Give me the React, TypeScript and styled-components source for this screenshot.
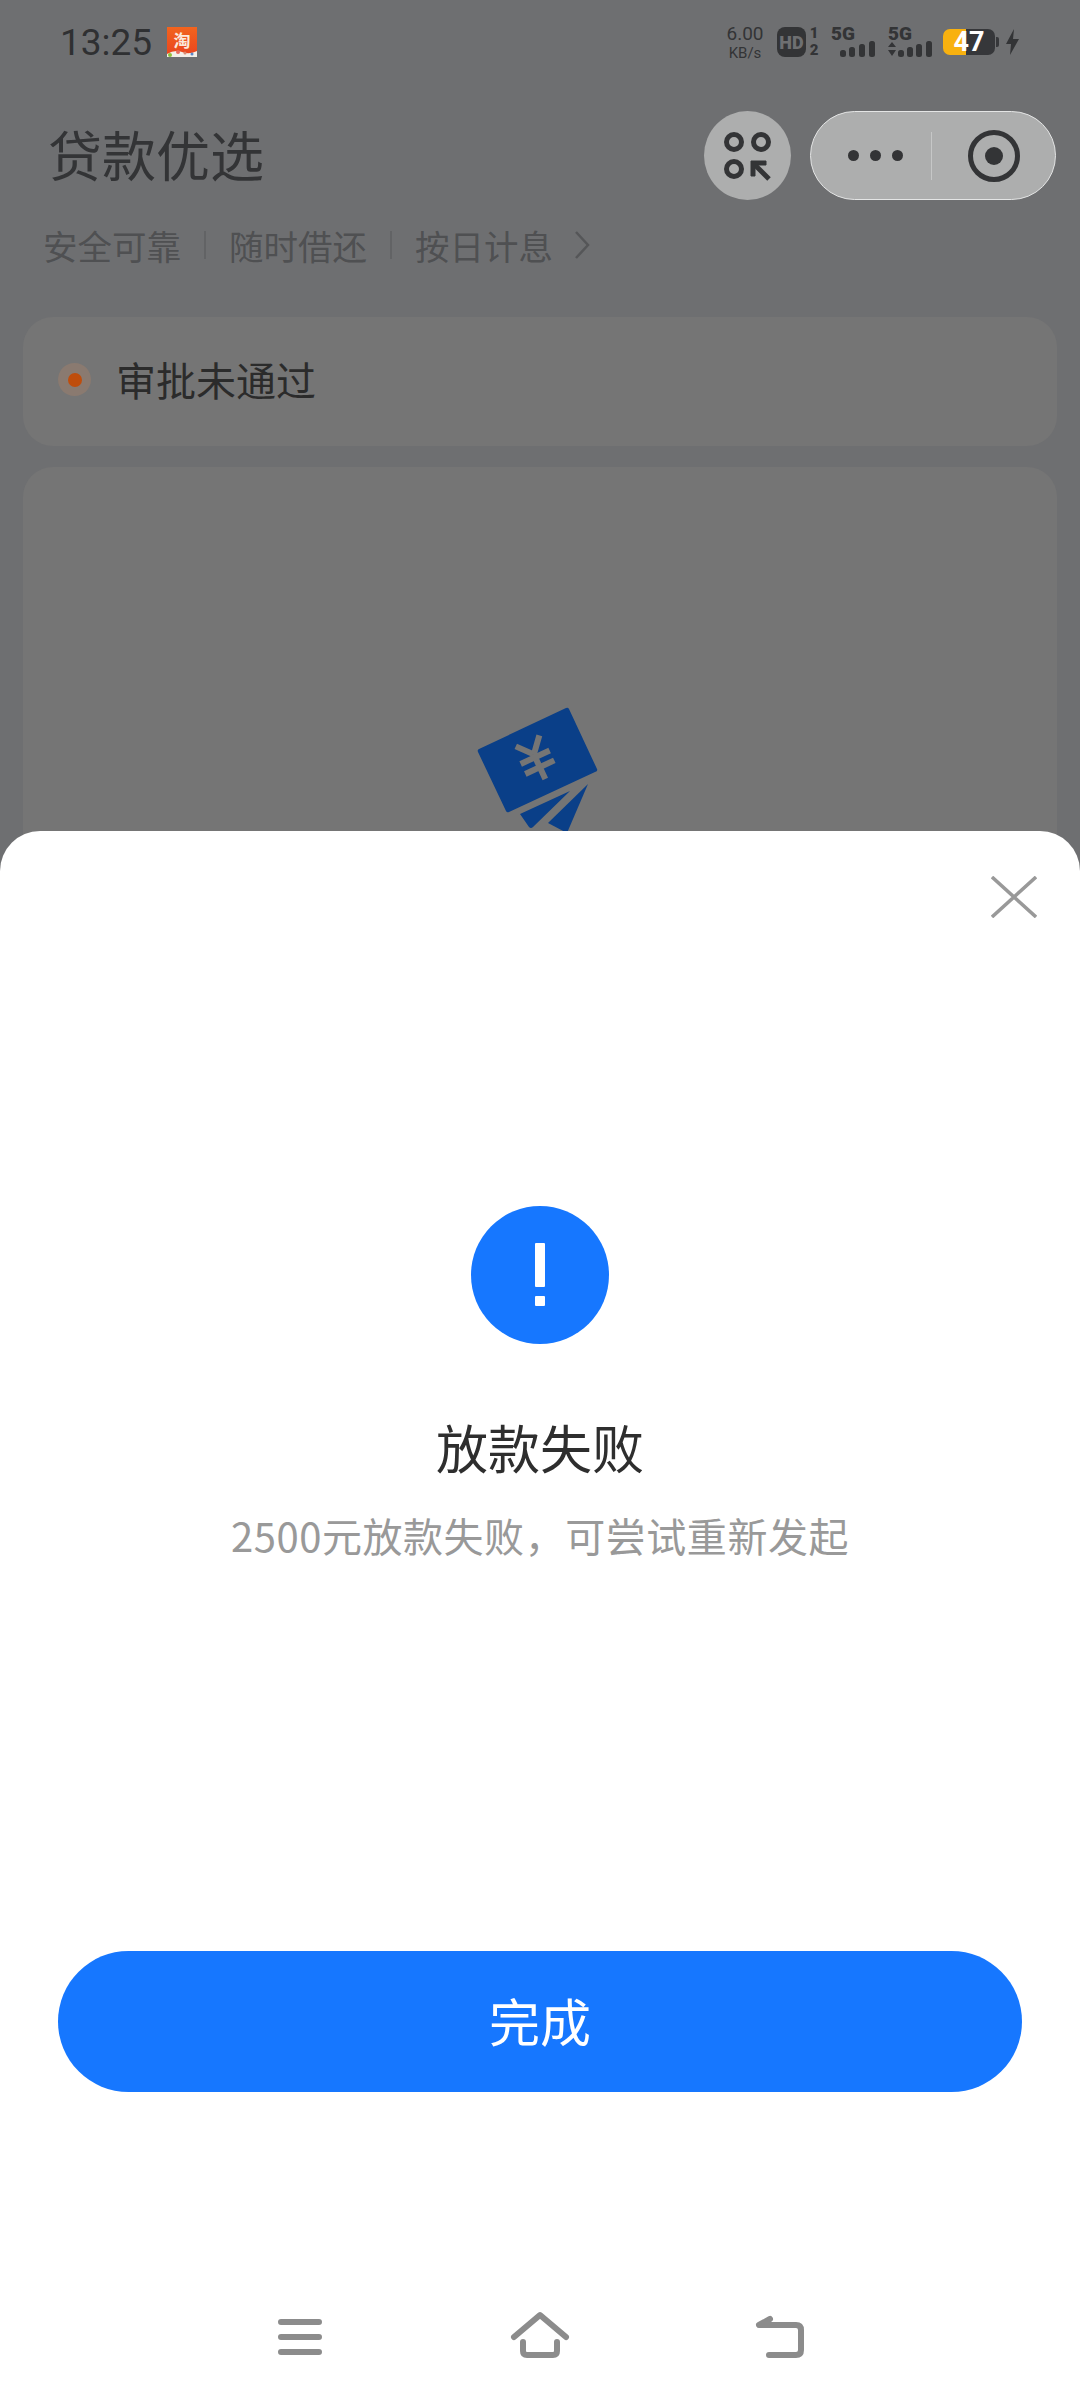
import styled, { createGlobalStyle } from 'styled-components';

const cjk = `"Noto Sans CJK SC", "Noto Sans", sans-serif`;
const latin = `Roboto, "Noto Sans CJK SC", sans-serif`;

const GlobalStyle = createGlobalStyle`
  html, body {
    margin: 0;
    padding: 0;
    background: #6e6f71;
  }
  * { box-sizing: border-box; }
`;

const Page = styled.div`
  position: relative;
  width: 1080px;
  height: 2400px;
  overflow: hidden;
  background: #6e6f71;
  font-family: ${cjk};
`;

const StatusBar = styled.div`
  height: 84px;
  display: flex;
  align-items: center;
  justify-content: space-between;
  padding: 0 61px 0 60px;
`;

const StatusLeft = styled.div`
  display: flex;
  align-items: center;
  gap: 15px;
`;

const Time = styled.span`
  font-family: ${latin};
  font-size: 37px;
  color: #2f3032;
  line-height: 1;
`;

const StatusRight = styled.div`
  display: flex;
  align-items: center;
`;

const NetSpeed = styled.div`
  width: 38px;
  display: flex;
  flex-direction: column;
  align-items: center;
  color: #333436;
  font-family: ${latin};
  line-height: 1;
  margin-right: 13px;
`;

const SpeedValue = styled.span`
  font-size: 19px;
  margin-bottom: 3px;
`;

const SpeedUnit = styled.span`
  font-size: 15px;
`;

const HdBadge = styled.span`
  width: 29px;
  height: 30px;
  border-radius: 8px;
  background: #333436;
  color: #6e6f71;
  font-family: ${latin};
  font-weight: 900;
  font-size: 18px;
  display: flex;
  align-items: center;
  justify-content: center;
  margin-right: 3px;
`;

const SimDigits = styled.div`
  width: 10px;
  height: 30px;
  display: flex;
  flex-direction: column;
  justify-content: space-between;
  align-items: center;
  font-family: ${latin};
  font-weight: 900;
  font-size: 15px;
  line-height: 13px;
  color: #333436;
  margin-right: 12px;
`;

const SignalGroup = styled.div<{ $gap: number }>`
  width: 44px;
  height: 30px;
  margin-right: ${p => p.$gap}px;
  display: flex;
  flex-direction: column;
`;

const SignalLabel = styled.span`
  font-family: ${latin};
  font-weight: 900;
  font-size: 19px;
  line-height: 14px;
  color: #333436;
`;

const Battery = styled.div`
  position: relative;
  width: 52px;
  height: 26px;
  border-radius: 7px;
  background: linear-gradient(90deg, #f8b10f 23px, #36373a 23px);
  color: #fff;
  font-family: ${latin};
  font-weight: 700;
  font-size: 27px;
  line-height: 26px;
  text-align: center;
  margin-right: 11px;

  &::after {
    content: '';
    position: absolute;
    right: -4px;
    top: 8px;
    width: 3px;
    height: 10px;
    border-radius: 0 2px 2px 0;
    background: #36373a;
  }
`;

const HeaderRow = styled.div`
  margin-top: 27px;
  height: 89px;
  display: flex;
  align-items: center;
  justify-content: space-between;
  padding: 0 24px 0 48px;
`;

const PageTitle = styled.h1`
  margin: -5px 0 0;
  font-size: 54px;
  font-weight: 400;
  color: #333436;
  line-height: 89px;
`;

const HeaderActions = styled.div`
  display: flex;
  align-items: center;
  gap: 19px;
`;

const RoundAction = styled.div`
  width: 87px;
  height: 89px;
  border-radius: 50%;
  background: #adaeae;
  display: flex;
  align-items: center;
  justify-content: center;
`;

const Capsule = styled.div`
  width: 246px;
  height: 89px;
  border-radius: 45px;
  border: 1.5px solid #e4e5e5;
  background: #adaeae;
  display: flex;
  align-items: center;
`;

const CapsuleLeft = styled.div`
  width: 121px;
  height: 48px;
  display: flex;
  align-items: center;
  justify-content: center;
  gap: 11px;
  padding-left: 8px;
  border-right: 1px solid #c6c7c7;
`;

const CapsuleDot = styled.span`
  width: 11px;
  height: 11px;
  border-radius: 50%;
  background: #333436;
`;

const CapsuleRight = styled.div`
  flex: 1;
  display: flex;
  align-items: center;
  justify-content: center;
`;

const Selling = styled.div`
  margin-top: 22px;
  height: 46px;
  display: flex;
  align-items: center;
  gap: 23px;
  padding-left: 43px;
  color: #4f5052;
  font-size: 34.5px;
  line-height: 46px;
`;

const SellingDivider = styled.span`
  width: 2px;
  height: 28px;
  background: #626365;
`;

const SellingChevron = styled.svg`
  width: 20px;
  height: 30px;
  margin-left: -4px;
`;

const AlertCard = styled.div`
  margin: 49px 23px 0;
  height: 129px;
  border-radius: 30px;
  background: #757575;
  display: flex;
  align-items: center;
  padding-left: 35px;
`;

const StatusHalo = styled.span`
  width: 33px;
  height: 33px;
  border-radius: 50%;
  background: #8a7a70;
  display: flex;
  align-items: center;
  justify-content: center;
  margin: -4px 25px 0 0;
`;

const StatusDot = styled.span`
  width: 14px;
  height: 14px;
  border-radius: 50%;
  background: #bf4d0c;
`;

const AlertText = styled.span`
  font-size: 40px;
  color: #2b2b2b;
  line-height: 48px;
  margin-top: -6px;
`;

const LoanCard = styled.div`
  margin: 21px 23px 0;
  height: 800px;
  border-radius: 30px 30px 0 0;
  background: #757575;
  display: flex;
  justify-content: center;
  padding-top: 234px;
`;

const Sheet = styled.div`
  position: absolute;
  left: 0;
  right: 0;
  top: 831px;
  bottom: 0;
  background: #fff;
  border-radius: 40px 40px 0 0;
  display: flex;
  flex-direction: column;
  align-items: center;
`;

const CloseRow = styled.div`
  align-self: stretch;
  display: flex;
  justify-content: flex-end;
  padding: 45px 43px 0 0;
`;

const NoticeCircle = styled.div`
  margin-top: 288px;
  width: 138px;
  height: 138px;
  border-radius: 50%;
  background: #1677ff;
  display: flex;
  flex-direction: column;
  align-items: center;
  padding-top: 37px;
`;

const NoticeStem = styled.span`
  width: 10px;
  height: 44px;
  background: #fff;
  border-radius: 1px;
`;

const NoticeDot = styled.span`
  width: 10px;
  height: 10px;
  margin-top: 9px;
  background: #fff;
  border-radius: 1px;
`;

const ResultTitle = styled.div`
  margin-top: 73px;
  font-size: 52px;
  line-height: 60px;
  color: #2e2e2e;
  font-weight: 400;
`;

const ResultText = styled.div`
  margin-top: 33px;
  font-size: 40px;
  line-height: 50px;
  letter-spacing: 0.55px;
  color: #999;
`;

const DoneButton = styled.button`
  margin-top: 391px;
  width: 964px;
  height: 141px;
  border: none;
  border-radius: 71px;
  background: #1677ff;
  color: #fff;
  font-family: ${cjk};
  font-size: 51px;
  line-height: 60px;
  padding: 0 0 3px;
`;

const NavBar = styled.div`
  margin-top: 218px;
  display: flex;
  justify-content: center;
  gap: 180px;
`;

const NavIcon = styled.svg`
  width: 60px;
  height: 50px;
  fill: none;
  stroke: #8c8c8c;
  stroke-width: 6;
  stroke-linecap: round;
  stroke-linejoin: round;
`;

const bars = (x0: number, xs: number[]) =>
  xs.map((x, i) => {
    const h = 7 + i * 3;
    return <rect key={x} x={x - x0} y={16 - h} width={6} height={h} rx={2.5} fill="#333436" />;
  });

const TaobaoIcon = () => (
  <svg width="30" height="30" viewBox="0 0 30 30">
    <defs>
      <linearGradient id="tb" x1="0" y1="0" x2="0" y2="1">
        <stop offset="0" stopColor="#f2641e" />
        <stop offset="1" stopColor="#e9431f" />
      </linearGradient>
    </defs>
    <rect width="30" height="30" fill="url(#tb)" />
    <path d="M0 27 Q8 22 15 25 T30 24 V30 H0 Z" fill="#f3efe8" />
    <text x="15" y="20" textAnchor="middle" fontSize="17" fontWeight="700" fill="#fbe9dc" fontFamily={cjk}>淘</text>
    <circle cx="3" cy="28" r="2" fill="#8fbf3a" />
    <circle cx="11" cy="25" r="2" fill="#e76a5c" />
    <circle cx="18" cy="26" r="1.5" fill="#d98a70" />
    <circle cx="25" cy="27" r="1.5" fill="#5b87c9" />
  </svg>
);

const LoanLogo = () => (
  <svg width="140" height="140" viewBox="470 700 140 140">
    <path d="M569 708 L597 768 Q598 770 595 771 L509 811 Q507 812 506 810 L478 751 Q477 749 479 748 L566 707 Q568 706 569 708 Z" fill="#0a3f88" />
    <path d="M520 813 L570 790 L533 826 Q531 828 529 826 Z" fill="#0a3f88" />
    <path d="M588 783 L567 832 L548 822 Z" fill="#0a3f88" />
    <g transform="translate(536 758) rotate(-25)" stroke="#757575" strokeWidth="6" fill="none">
      <path d="M-13 -20 L0 -5 L13 -20" />
      <path d="M0 -5 L0 22" />
      <path d="M-16 -2 L16 -2" />
      <path d="M-16 9 L16 9" />
    </g>
  </svg>
);

const App = () => (
  <Page>
    <GlobalStyle />
    <StatusBar>
      <StatusLeft>
        <Time>13:25</Time>
        <TaobaoIcon />
      </StatusLeft>
      <StatusRight>
        <NetSpeed>
          <SpeedValue>6.00</SpeedValue>
          <SpeedUnit>KB/s</SpeedUnit>
        </NetSpeed>
        <HdBadge>HD</HdBadge>
        <SimDigits>
          <span>1</span>
          <span>2</span>
        </SimDigits>
        <SignalGroup $gap={13}>
          <SignalLabel>5G</SignalLabel>
          <svg width="44" height="16" viewBox="0 0 44 16">{bars(831, [840, 849, 859, 869])}</svg>
        </SignalGroup>
        <SignalGroup $gap={11}>
          <SignalLabel>5G</SignalLabel>
          <svg width="44" height="16" viewBox="0 0 44 16">
            <path d="M0 6 L4 1 L8 6 Z M0 9 L8 9 L4 15 Z" fill="#333436" />
            {bars(888, [898, 907, 916, 926])}
          </svg>
        </SignalGroup>
        <Battery>47</Battery>
        <svg width="13" height="26" viewBox="0 0 13 26">
          <path d="M8 0 L0 15 L5 15 L4 26 L13 10 L7 10 Z" fill="#333436" />
        </svg>
      </StatusRight>
    </StatusBar>

    <HeaderRow>
      <PageTitle>贷款优选</PageTitle>
      <HeaderActions>
        <RoundAction>
          <svg width="56" height="56" viewBox="0 0 56 56" fill="none" stroke="#333436" strokeWidth="5">
            <circle cx="14" cy="14" r="7.5" />
            <circle cx="41" cy="14" r="7.5" />
            <circle cx="14" cy="41" r="7.5" />
            <path d="M33 35 L49 51" strokeWidth="5" />
            <path d="M31 33 L46 33 L46 37 L35 37 L35 48 L31 48 Z" fill="#333436" strokeWidth="1" />
          </svg>
        </RoundAction>
        <Capsule>
          <CapsuleLeft>
            <CapsuleDot />
            <CapsuleDot />
            <CapsuleDot />
          </CapsuleLeft>
          <CapsuleRight>
            <svg width="54" height="54" viewBox="0 0 54 54">
              <circle cx="27" cy="27" r="23.5" fill="none" stroke="#333436" strokeWidth="5" />
              <circle cx="27" cy="27" r="9" fill="#333436" />
            </svg>
          </CapsuleRight>
        </Capsule>
      </HeaderActions>
    </HeaderRow>

    <Selling>
      <span>安全可靠</span>
      <SellingDivider />
      <span>随时借还</span>
      <SellingDivider />
      <span>按日计息</span>
      <SellingChevron viewBox="0 0 20 30" fill="none" stroke="#555658" strokeWidth="2.5">
        <path d="M4 2 L16 15 L4 28" />
      </SellingChevron>
    </Selling>

    <AlertCard>
      <StatusHalo>
        <StatusDot />
      </StatusHalo>
      <AlertText>审批未通过</AlertText>
    </AlertCard>

    <LoanCard>
      <LoanLogo />
    </LoanCard>

    <Sheet>
      <CloseRow>
        <svg width="46" height="42" viewBox="0 0 46 42" stroke="#999" strokeWidth="3.5" fill="none">
          <path d="M1 1 L45 41 M45 1 L1 41" />
        </svg>
      </CloseRow>
      <NoticeCircle>
        <NoticeStem />
        <NoticeDot />
      </NoticeCircle>
      <ResultTitle>放款失败</ResultTitle>
      <ResultText>2500元放款失败，可尝试重新发起</ResultText>
      <DoneButton>完成</DoneButton>
      <NavBar>
        <NavIcon viewBox="0 0 60 50">
          <path d="M11 12 H49 M11 27 H49 M11 42 H49" />
        </NavIcon>
        <NavIcon viewBox="0 0 60 50">
          <path d="M4 27 L30 5 L56 27" />
          <path d="M13 32 V41 Q13 45 17 45 H43 Q47 45 47 41 V32" />
        </NavIcon>
        <NavIcon viewBox="0 0 60 50">
          <path d="M20 9 L9 15 H46 Q51 15 51 20 V40 Q51 45 46 45 H19" />
        </NavIcon>
      </NavBar>
    </Sheet>
  </Page>
);

export default App;
